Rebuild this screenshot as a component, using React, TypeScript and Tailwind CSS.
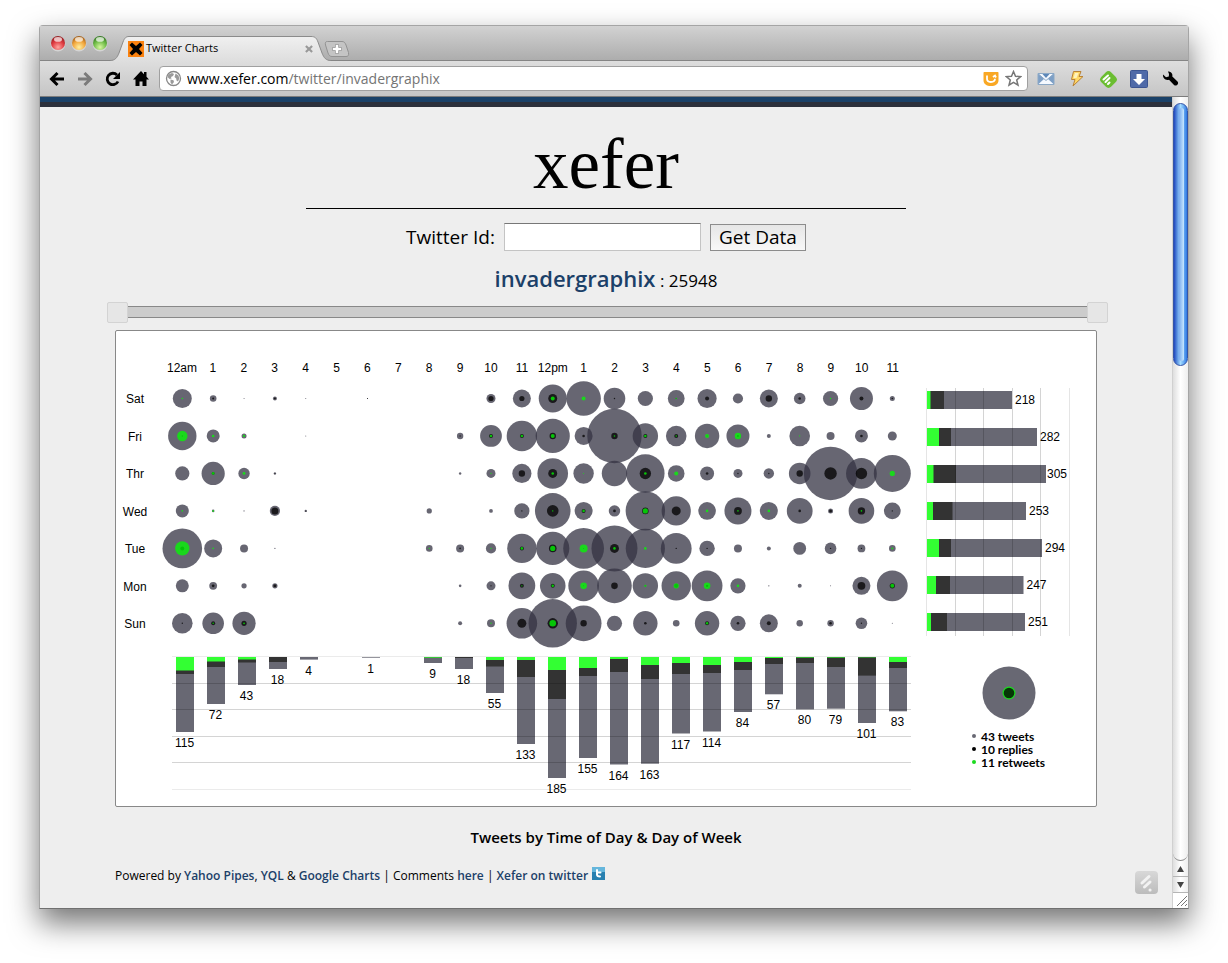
import { useState } from "react";
import type { ReactNode } from "react";

// [hour, tweets, replies, retweets] as circle radii
type Bubble = [number, number, number, number];
// [label, retweets, replies end, total] as lengths
type Bar = [number, number, number, number];

const HOURS = [
    "12am", "1", "2", "3", "4", "5", "6", "7", "8", "9", "10", "11",
    "12pm", "1", "2", "3", "4", "5", "6", "7", "8", "9", "10", "11",
];

const DAYS: { name: string; bubbles: Bubble[] }[] = [
    { name: "Sat", bubbles: [
        [0, 9.5, 0, 0.8], [1, 3.3, 1, 0], [2, 0.5, 0, 0], [3, 2, 1, 0], [4, 0.5, 0, 0], [6, 0.5, 0.5, 0],
        [10, 4.5, 2.6, 0], [11, 9, 2.6, 0], [12, 14, 4.5, 2], [13, 17.3, 0, 2], [14, 10.8, 0.7, 0], [15, 7.6, 0, 0],
        [16, 8.4, 0.6, 0.8], [17, 9.6, 2, 0], [18, 5.1, 0, 0], [19, 9, 3.2, 0], [20, 5.8, 1.3, 0], [21, 7.6, 0, 0.8],
        [22, 11.5, 2, 0], [23, 2.5, 0.8, 0],
    ] },
    { name: "Fri", bubbles: [
        [0, 14.2, 0.7, 5.2], [1, 6.5, 0, 1.3], [2, 2.5, 0, 1.1], [4, 0.5, 0, 0], [9, 3.2, 0.7, 0], [10, 10.9, 2, 1.3],
        [11, 15.2, 2, 1.3], [12, 17.1, 3.2, 2], [13, 9, 1.3, 0], [14, 27.2, 3.2, 0.8], [15, 12.7, 2, 1.3],
        [16, 10.3, 2, 0.8], [17, 12.2, 0.7, 2], [18, 11.5, 1, 3.2], [19, 2, 0, 0], [20, 10.3, 0, 0.6],
        [21, 4, 0, 0], [22, 6.5, 1.3, 0], [23, 4.5, 0, 0],
    ] },
    { name: "Thr", bubbles: [
        [0, 7.1, 0, 0], [1, 11.6, 1.4, 1.4], [2, 5.7, 0, 1.4], [3, 1.2, 0.5, 0], [9, 1.2, 0, 0], [10, 4.5, 0, 0.6],
        [11, 9.6, 3.2, 0], [12, 15.3, 4.5, 1.3], [13, 10.2, 0, 0.5], [14, 12.7, 0, 0], [15, 19.2, 5.7, 1.3],
        [16, 8.3, 0, 2], [17, 7, 1.3, 0], [18, 4.5, 0.7, 0], [19, 5.2, 0.7, 0], [20, 10.8, 3.2, 0],
        [21, 26.7, 6.2, 0], [22, 15.4, 5.7, 0], [23, 18.5, 0, 2.6],
    ] },
    { name: "Wed", bubbles: [
        [0, 6.5, 0, 0.8], [1, 1.3, 0, 0.9], [2, 0.6, 0, 0], [3, 5.1, 3.5, 0], [4, 1.2, 0.5, 0], [8, 2.6, 0, 0],
        [10, 1.9, 0, 0], [11, 7.6, 0.7, 0], [12, 17.8, 5.8, 0.7], [13, 9, 2, 1.3], [14, 5.7, 1.4, 0],
        [15, 19.7, 3.3, 2.6], [16, 14.6, 4.5, 0], [17, 8.8, 0, 1.3], [18, 13.5, 3.9, 0.8], [19, 9, 0, 1.3],
        [20, 12.9, 1.3, 0], [21, 2.5, 1.5, 0], [22, 12.8, 3.7, 0.8], [23, 8.4, 0.7, 0],
    ] },
    { name: "Tue", bubbles: [
        [0, 19.8, 2, 7.1], [1, 9, 0, 0.8], [2, 4, 0, 0], [3, 0.6, 0, 0], [8, 3.3, 0, 0.6], [9, 4, 0.8, 0],
        [10, 5.1, 0, 0.7], [11, 14.7, 2, 1.3], [12, 16.6, 3.8, 2.6], [13, 20.4, 0.5, 4], [14, 23, 4.5, 1.3],
        [15, 19.6, 0, 1.3], [16, 15.4, 0.7, 0], [17, 7.7, 0.7, 0], [18, 4, 0, 0], [19, 2, 0, 0], [20, 6.4, 0, 0],
        [21, 5.8, 0.7, 0], [22, 3.9, 0.7, 0], [23, 3.3, 0, 0.9],
    ] },
    { name: "Mon", bubbles: [
        [0, 6.5, 0, 0], [1, 3.9, 1.4, 0], [2, 2.6, 0, 0], [3, 2.6, 1.5, 0], [9, 1.3, 0, 0], [10, 4.5, 0.7, 0],
        [11, 13.4, 2, 0.7], [12, 12.8, 2, 1.3], [13, 15.3, 0.5, 3.3], [14, 17.3, 3.3, 0], [15, 12.7, 0.7, 1.1],
        [16, 14.7, 2, 2.6], [17, 15.4, 1.2, 3.3], [18, 7.6, 0, 1.3], [19, 0.7, 0, 0], [20, 2, 0, 0], [21, 0.5, 0, 0],
        [22, 9, 3.9, 0], [23, 15.4, 2.6, 2],
    ] },
    { name: "Sun", bubbles: [
        [0, 10.3, 0.7, 0], [1, 10.8, 2, 0.8], [2, 11.6, 2.6, 0.9], [9, 2, 0, 0], [10, 4, 0, 0.7], [11, 15.3, 4.5, 0],
        [12, 24.2, 5.2, 3.3], [13, 17.9, 3.2, 0], [14, 7.6, 0, 0], [15, 12.2, 1.3, 0], [16, 3.3, 0, 0],
        [17, 12.2, 2, 1.2], [18, 7.6, 1.3, 0], [19, 9, 2, 0], [20, 3.2, 0, 0], [21, 3.2, 1.3, 0], [22, 5.8, 0.7, 0],
        [23, 0.5, 0, 0],
    ] },
];

const DAY_BARS: Bar[] = [
    [218, 3.5, 17, 85], [282, 12, 24, 110], [305, 6.5, 29, 119], [253, 6, 25.5, 99],
    [294, 12, 24, 115], [247, 9, 23, 96.5], [251, 4, 20, 98],
];

const HOUR_BARS: (Bar | null)[] = [
    [115, 13.5, 17, 75], [72, 4.5, 10, 47], [43, 2.5, 5.5, 28], [18, 0, 5, 12], [4, 0, 0, 2.6], null,
    [1, 0, 0, 0.7], null, [9, 0.7, 0.7, 6], [18, 0, 1, 12], [55, 3, 9.5, 36], [133, 3, 20, 87],
    [185, 13, 42, 121], [155, 11, 19, 101], [164, 2, 15, 107.5], [163, 8, 22, 106.7], [117, 6, 17, 76.5],
    [114, 8, 16, 74.5], [84, 5, 13, 55], [57, 1, 7, 37.3], [80, 0.6, 6, 52.4], [79, 0.6, 10, 51.7],
    [101, 0.4, 18.6, 66], [83, 5, 11, 54.3],
];

function BubbleChart() {
    return (
        <svg viewBox="0 0 806 318" className="block w-full overflow-visible" fontFamily="Liberation Sans, Arial, sans-serif" fontSize="12">
            {HOURS.map((h, i) => (
                <text key={i} x={66 + i * 30.9} y="41" textAnchor="middle">{h}</text>
            ))}
            {DAYS.map((d, j) => (
                <g key={d.name}>
                    <text x="19" y={72 + j * 37.5} textAnchor="middle">{d.name}</text>
                    {d.bubbles.map(([h, r]) => (
                        <circle key={h} cx={66.3 + h * 30.87} cy={67.5 + j * 37.47} r={r} fill="#343343" fillOpacity="0.75" />
                    ))}
                </g>
            ))}
            {DAYS.map((d, j) => d.bubbles.map(([h, , replies, retweets]) => (
                <g key={d.name + h} fillOpacity="0.75">
                    <circle cx={66.3 + h * 30.87} cy={67.5 + j * 37.47} r={replies} fill="#000" />
                    <circle cx={66.3 + h * 30.87} cy={67.5 + j * 37.47} r={retweets} fill="#0f0" />
                </g>
            )))}
        </svg>
    );
}

function DayChart() {
    return (
        <svg viewBox="0 0 174 318" className="block w-full overflow-visible" fontFamily="Liberation Sans, Arial, sans-serif" fontSize="12">
            {DAY_BARS.map(([, green, dark, total], j) => (
                <g key={j}>
                    <rect x="5" y={60 + j * 37} width={total} height="18" fill="#686873" />
                    <rect x="5" y={60 + j * 37} width={dark} height="18" fill="#333" />
                    <rect x="5" y={60 + j * 37} width={green} height="18" fill="#3f3" />
                </g>
            ))}
            {[4, 33, 61, 90, 118, 147].map((x, i) => (
                <rect key={x} x={x} y="57" width="1" height="248" fillOpacity={i % 5 ? 0.17 : 0.1} />
            ))}
            {DAY_BARS.map(([label, , , total], j) => (
                <text key={j} x={total > 118 ? total + 6 : total + 8} y={73 + j * 37}>{label}</text>
            ))}
        </svg>
    );
}

function HourChart() {
    return (
        <svg viewBox="0 0 806 157" className="block w-full overflow-visible" fontFamily="Liberation Sans, Arial, sans-serif" fontSize="12">
            {HOUR_BARS.map((bar, i) => bar && (
                <g key={i}>
                    <rect x={60 + i * 31} y="8" width="18" height={bar[3]} fill="#686873" />
                    <rect x={60 + i * 31} y="8" width="18" height={bar[2]} fill="#333" />
                    <rect x={60 + i * 31} y="8" width="18" height={bar[1]} fill="#3f3" />
                </g>
            ))}
            {[7, 34, 60, 87, 113, 140].map((y, i) => (
                <rect key={y} x="56" y={y} width="739" height="1" fillOpacity={i % 5 ? 0.17 : 0.08} />
            ))}
            {HOUR_BARS.map((bar, i) => bar && (
                <text key={i} x={68.5 + i * 31} y={bar[3] + 23} textAnchor="middle">{bar[0]}</text>
            ))}
        </svg>
    );
}

function Legend() {
    return (
        <div className="flex flex-col pt-[17px] pl-[50px]">
            <svg width="54" height="54" viewBox="0 0 54 54" className="ml-[10px]">
                <circle cx="27" cy="27" r="26.5" fill="#686873" />
                <circle cx="27" cy="27" r="6.5" fill="#1bdb1e" />
                <circle cx="27" cy="27" r="5.3" fill="#063606" />
            </svg>
            <ul className="mt-[10px] font-['Lato','Trebuchet_MS',sans-serif] text-[12px] leading-[13px] font-bold">
                <li className="flex items-center gap-[5px]"><i className="size-1 rounded-full bg-[#686873]" />43 tweets</li>
                <li className="flex items-center gap-[5px]"><i className="size-1 rounded-full bg-black" />10 replies</li>
                <li className="flex items-center gap-[5px]"><i className="size-1 rounded-full bg-[#1bdb1e]" />11 retweets</li>
            </ul>
        </div>
    );
}

function TabStrip() {
    return (
        <div className="flex h-[35px] items-end border-b border-[#858585] bg-linear-to-b from-[#d2d2d2] to-[#adadad] pl-[10px]">
            <svg width="58" height="20" viewBox="0 0 58 20" className="mb-[6px] shrink-0">
                <defs>
                    <radialGradient id="red" cx="50%" cy="80%" r="80%"><stop offset="0" stopColor="#ffa6a0" /><stop offset="0.55" stopColor="#df3a40" /><stop offset="1" stopColor="#8c1d20" /></radialGradient>
                    <radialGradient id="amber" cx="50%" cy="80%" r="80%"><stop offset="0" stopColor="#fff0a0" /><stop offset="0.55" stopColor="#f2a63c" /><stop offset="1" stopColor="#9a5817" /></radialGradient>
                    <radialGradient id="lime" cx="50%" cy="80%" r="80%"><stop offset="0" stopColor="#d8f7a0" /><stop offset="0.55" stopColor="#70bd48" /><stop offset="1" stopColor="#2f701f" /></radialGradient>
                </defs>
                {["red", "amber", "lime"].map((c, i) => (
                    <g key={c}>
                        <circle cx={8 + i * 21} cy="10" r="7.4" fill="#fff" fillOpacity="0.4" />
                        <circle cx={8 + i * 21} cy="9" r="7" fill={`url(#${c})`} />
                        <ellipse cx={8 + i * 21} cy="5.4" rx="4" ry="2.4" fill="#fff" fillOpacity="0.7" />
                    </g>
                ))}
            </svg>
            <div className="relative -mb-px ml-[2px] flex h-[25px] w-[224px] shrink-0 items-center pr-[21px] pl-[18px]">
                <svg width="224" height="25" viewBox="0 0 224 25" className="absolute inset-0">
                    <defs><linearGradient id="tab" x2="0" y2="1"><stop stopColor="#f0f0f0" /><stop offset="1" stopColor="#dedede" /></linearGradient></defs>
                    <path d="M0 25 V24.5 C5 24.5 7 22 9 17 L13 6 C14.500 2 16 0.500 19 0.500 H201 C205 0.500 206.500 2 208 6 L212 17 C214 22 216 24.500 221 24.500 V25 Z" fill="url(#tab)" />
                    <path d="M0 24.500 C5 24.500 7 22 9 17 L13 6 C14.500 2 16 0.500 19 0.500 H201 C205 0.500 206.500 2 208 6 L212 17 C214 22 216 24.500 221 24.500" fill="none" stroke="#8b8b8b" />
                </svg>
                <svg width="16" height="16" viewBox="0 0 16 16" className="relative">
                    <path fill="#fb820f" d="M0 0h16v16H0z" />
                    <path d="M4 1.500 8 5l4-3.500L14.500 4 11 8l3.500 4-2.500 2.500L8 11l-4 3.500L1.500 12 5 8 1.500 4z" />
                </svg>
                <span className="relative ml-[2px] text-[11px]">Twitter Charts</span>
                <button aria-label="Close tab" className="relative ml-auto">
                    <svg width="8" height="8" viewBox="0 0 9 9" stroke="#999" strokeWidth="2.400"><path d="m1 1 7 7M8 1 1 8" /></svg>
                </button>
            </div>
            <button aria-label="New tab" className="mb-[2px] -ml-[10px]">
                <svg width="26" height="18" viewBox="0 0 26 18">
                    <path d="M3.500 1.500 H18 C20 1.500 21 2.500 22 5 L24.500 12.500 C25 15.500 24 16.500 22 16.500 H8 C6 16.500 5 15.500 4 13 L1.500 5 C1 2.500 1.500 1.500 3.500 1.500Z" fill="#c4c4c4" stroke="#929292" />
                    <path d="M8.500 9h9M13 4.500v9" stroke="#8d8d8d" strokeWidth="4" />
                    <path d="M9 9h8M13 5v8" stroke="#fff" strokeWidth="2.600" />
                </svg>
            </button>
        </div>
    );
}

function ToolButton({ label, children }: { label: string; children: ReactNode }) {
    return (
        <button aria-label={label} className="flex w-[20px] shrink-0 justify-center">
            <svg width="20" height="20" viewBox="0 0 20 20" fill="none">{children}</svg>
        </button>
    );
}

function Toolbar() {
    return (
        <div className="flex h-[36px] items-center border-b border-[#7c7c7c] bg-linear-to-b from-[#dedede] to-[#c5c5c5] pr-2 pl-[7px]">
            <div className="flex gap-2">
                <ToolButton label="Back"><path d="M17 10H5M10.500 4 4.500 10l6 6" stroke="#000" strokeWidth="3" /></ToolButton>
                <ToolButton label="Forward"><path d="M3 10h12M9.500 4l6 6-6 6" stroke="#7b7b7b" strokeWidth="3" /></ToolButton>
                <ToolButton label="Reload">
                    <path d="M15 12.500A5.700 5.700 0 1 1 14 6" stroke="#000" strokeWidth="2.800" />
                    <path d="M17 3v7h-7z" fill="#000" />
                </ToolButton>
                <ToolButton label="Home"><path d="M10 2 2 10.500h2.500V17H8.500v-4.500h3V17h4v-6.500H18l-2.500-2.700V3H13v2.200z" fill="#000" /></ToolButton>
            </div>
            <div className="ml-2 flex h-[25px] min-w-0 flex-1 items-center rounded border border-[#a0a0a0] bg-white px-[5px]">
                <svg width="17" height="17" viewBox="0 0 17 17" className="shrink-0">
                    <circle cx="8.500" cy="8.500" r="7" fill="#fff" stroke="#888" strokeWidth="1.300" />
                    <path d="M3.500 4.500 7 3l2 1-1 2-2 1 .5 1.500L4.500 9 2.500 7zM5.500 9.500l3 .8.5 1.700-2 2.500-1.500-2zM10.500 3.500l3 2 .8 3-1.300 3-1.500-1-.3-2-1.700-1.500.5-1.500z" fill="#9a9a9a" />
                </svg>
                <span className="relative ml-[5px] min-w-0 flex-1">
                    <input aria-label="Address" defaultValue="www.xefer.com/twitter/invadergraphix" className="block w-full text-[14px] leading-[20px] text-transparent caret-black outline-none" />
                    <span aria-hidden className="pointer-events-none absolute inset-0 truncate text-[14px] leading-[20px] text-[#747474]">
                        <span className="text-black">www.xefer.com</span>/twitter/invadergraphix
                    </span>
                </span>
                <svg width="16" height="16" viewBox="0 0 16 16" className="mr-[6px] shrink-0" fill="none">
                    <path d="M1.500 1h13c.6 0 1 .4 1 1v7c0 4-3 6-7.500 6S.5 13 .5 9V2c0-.6.4-1 1-1z" fill="#f9a825" />
                    <path d="M4 4.500v3.300c0 2 1.500 3.200 3.800 3.200 2.500 0 4.200-1.200 4.200-3.200M10 6l2-1.500 1 2" stroke="#fff" strokeWidth="1.800" />
                </svg>
                <svg width="17" height="17" viewBox="0 0 17 17" className="shrink-0">
                    <path d="m8.500 1.500 2 4.700 5.200.4-4 3.400 1.300 5.200-4.500-2.800L4 15.200 5.300 10l-4-3.400 5.200-.4z" fill="#fff" stroke="#777" strokeWidth="1.500" />
                </svg>
            </div>
            <div className="ml-2 flex gap-[11px]">
                <ToolButton label="Mail">
                    <path d="M2 4.500h16v11H2z" fill="#f5f9ff" />
                    <path d="M2 4.500 8 10l-6 5.500zM18 4.500 12 10l6 5.500z" fill="#7d9fc6" />
                    <path d="M6 4.500h8L10 9z" fill="#5d87b8" />
                    <path d="m2.500 5 7.500 6.500L17.500 5" stroke="#8ba8c6" />
                    <path d="M2 4.500h16v11H2z" stroke="#8ba8c6" />
                </ToolButton>
                <ToolButton label="Bolt">
                    <path d="M6.500 2.500h7.500l-2 5h4L6 17l2-6.500H4.500z" fill="#ffd866" stroke="#b98237" strokeLinejoin="round" />
                    <path d="M8 4h3.500L9.500 9H6.500z" fill="#fff3bd" />
                </ToolButton>
                <ToolButton label="Feedly">
                    <rect x="3.500" y="3.500" width="14" height="14" rx="4" transform="rotate(45 10.500 10.500)" fill="#6bbd31" />
                    <path d="m5.500 10.500 4.500-4M7.500 13l4-4M10 15l1.500-1.500" stroke="#fff" strokeWidth="2" strokeLinecap="round" />
                </ToolButton>
                <ToolButton label="Download">
                    <rect x="1.500" y="1.500" width="17" height="17" rx="1" fill="#4f6aa8" stroke="#3c5591" />
                    <path d="M7.500 5h5v5H16l-6 6-6-6h3.500z" fill="#fff" />
                </ToolButton>
                <ToolButton label="Settings">
                    <path d="M8 2.500c3 0 5 2.300 4.300 5l5.200 5c2 2-1.300 5.500-3.500 3.500l-5-5.300C5.500 11.800 2.500 9 3 5.500l3 2.700 2.800-.7L9 5z" fill="#000" />
                </ToolButton>
            </div>
        </div>
    );
}

function ScrollBar() {
    return (
        <div className="flex w-[16px] shrink-0 flex-col border-l border-[#d0d0d0] bg-linear-to-r from-[#dedede] via-white to-[#eeeeee]">
            <div className="flex-1 rounded-b-full border-b border-[#888] pt-[6px]">
                <div className="flex h-[263px] justify-center rounded-full border border-[#3455a8] bg-linear-to-r from-[#2345bd] via-[#a4dcff] to-[#2d78e2]">
                    <div className="my-1 ml-px w-[5px] rounded-full bg-linear-to-r from-[#7cabed] to-[#c7e8ff]" />
                </div>
            </div>
            <button aria-label="Scroll up" className="flex h-[16px] items-center justify-center border-b border-[#b5b5b5]">
                <svg width="7" height="6" viewBox="0 0 7 6" fill="#444"><path d="M3.500 0 7 6H0z" /></svg>
            </button>
            <button aria-label="Scroll down" className="flex h-[16px] items-center justify-center border-b border-[#b5b5b5]">
                <svg width="7" height="6" viewBox="0 0 7 6" fill="#444"><path d="M0 0h7L3.500 6z" /></svg>
            </button>
            <svg width="15" height="15" viewBox="0 0 15 15" className="bg-white" stroke="#777"><path d="M4 13 14 3M8 13l6-6M12 13l2-2" /></svg>
        </div>
    );
}

const THUMB = "pointer-events-none absolute inset-0 m-0 h-full w-full appearance-none bg-transparent [&::-webkit-slider-thumb]:pointer-events-auto [&::-webkit-slider-thumb]:size-[21px] [&::-webkit-slider-thumb]:appearance-none [&::-webkit-slider-thumb]:rounded-xs [&::-webkit-slider-thumb]:border [&::-webkit-slider-thumb]:border-[#d3d3d3] [&::-webkit-slider-thumb]:bg-[#e6e6e6]";

function RangeSlider() {
    const [from, setFrom] = useState(0);
    const [to, setTo] = useState(100);

    return (
        <div className="relative flex h-[21px] w-full max-w-[1001px] items-center px-2">
            <div className="h-[12px] w-full border border-[#888] bg-[#ccc]" />
            <input type="range" aria-label="First tweet" className={THUMB} value={from} onChange={e => setFrom(Math.min(+e.target.value, to))} />
            <input type="range" aria-label="Last tweet" className={THUMB} value={to} onChange={e => setTo(Math.max(+e.target.value, from))} />
        </div>
    );
}

function Page() {
    const [id, setId] = useState("");
    const link = "font-semibold text-[#1b4068]";

    return (
        <main className="relative min-w-0 flex-1 bg-[#eee] text-black">
            <div className="h-[5px] bg-[#1a4168]" />
            <div className="h-[5px] bg-[#2c303b]" />
            <div className="flex flex-col items-center">
                <h1 className="w-full max-w-[600px] border-b border-black pt-[17px] pb-[4px] text-center font-['Liberation_Serif',serif] text-[71px] leading-[80px]">xefer</h1>
                <form className="mt-[14px] flex items-center text-[19px]" onSubmit={e => e.preventDefault()}>
                    <label htmlFor="twitter-id">Twitter Id:</label>
                    <input
                        id="twitter-id"
                        value={id}
                        onChange={e => setId(e.target.value)}
                        className="ml-[9px] h-[28px] w-[197px] border border-[#c4c4c4] border-t-[#777] bg-white px-1 outline-none"
                    />
                    <button className="ml-[9px] h-[27px] w-[96px] border border-[#8c8c8c] bg-linear-to-b from-[#e6e6e6] to-[#f8f8f8] leading-[24px]">Get Data</button>
                </form>
                <p className="mt-[10px] text-[17px] leading-[32px]">
                    <a href="#invadergraphix" className="text-[22px] font-semibold text-[#1b4068]">invadergraphix</a> : 25948
                </p>
                <div className="mt-[5px] flex w-full justify-center pl-[3px]"><RangeSlider /></div>
                <section className="mt-[7px] grid w-full max-w-[982px] grid-cols-[806fr_174fr] rounded-xs border border-[#888] bg-white">
                    <BubbleChart />
                    <DayChart />
                    <HourChart />
                    <Legend />
                </section>
                <h2 className="mt-[20px] text-[15px] leading-[20px] font-semibold">Tweets by Time of Day &amp; Day of Week</h2>
                <footer className="mt-[19px] mb-[20px] flex w-full max-w-[982px] items-center text-[12px] leading-[20px]">
                    <p>
                        Powered by <a href="#pipes" className={link}>Yahoo Pipes</a>, <a href="#yql" className={link}>YQL</a> &amp; <a href="#charts" className={link}>Google Charts</a> | Comments <a href="#comments" className={link}>here</a> | <a href="#twitter" className={link}>Xefer on twitter</a>
                    </p>
                    <svg width="13" height="13" viewBox="0 0 13 13" className="mb-1 ml-1">
                        <path fill="#2880b0" d="M0 0h13v13H0z" />
                        <path fill="#65b6dc" d="M0 0h13v5H0z" />
                        <path d="M5 3v4.500c0 1.500 1 2 3 2M5 5.500h3.500" stroke="#fff" strokeWidth="2" strokeLinecap="round" fill="none" />
                    </svg>
                </footer>
            </div>
            <button aria-label="Feedly mini" className="absolute right-[14px] bottom-[14px] flex size-[23px] items-center justify-center rounded-sm bg-linear-to-b from-[#d8d8d8] to-[#bcbcbc]">
                <svg width="17" height="19" viewBox="0 0 17 19" stroke="#f2f2f2" strokeWidth="3" strokeLinecap="round"><path d="m4 10 7-6.500M6.500 14l5.500-5M12 17h.1" /></svg>
            </button>
        </main>
    );
}

export default function App() {
    return (
        <div className="flex min-h-screen flex-col bg-white px-[39px] pt-[25px] pb-[54px] font-['Open_Sans','Trebuchet_MS',sans-serif] text-black">
            <div className="flex flex-1 flex-col rounded-t border border-[#a5a5a5] border-b-[#707070] shadow-[0_14px_30px_rgba(0,0,0,0.55)]">
                <TabStrip />
                <Toolbar />
                <div className="flex flex-1">
                    <Page />
                    <ScrollBar />
                </div>
            </div>
        </div>
    );
}
